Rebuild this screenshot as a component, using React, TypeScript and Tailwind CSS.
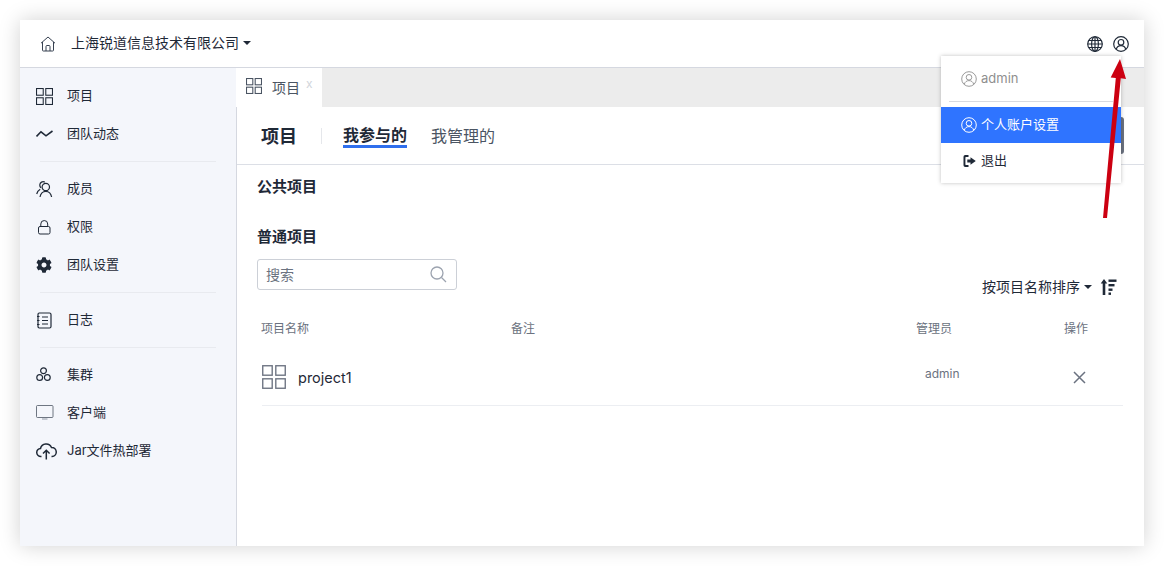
import React from "react";

const Grid = ({ size = 17, color = "#1f2937", sw = 1 }: { size?: number; color?: string; sw?: number }) => (
  <svg width={size} height={size} viewBox="0 0 16 16" fill="none" stroke={color} strokeWidth={sw}>
    <rect x="0.5" y="0.5" width="6.3" height="6.3" />
    <rect x="9.2" y="0.5" width="6.3" height="6.3" />
    <rect x="0.5" y="9.2" width="6.3" height="6.3" />
    <rect x="9.2" y="9.2" width="6.3" height="6.3" />
  </svg>
);

const UserCircle = ({ size = 16, color = "#1f2937", sw = 1.2 }: { size?: number; color?: string; sw?: number }) => (
  <svg width={size} height={size} viewBox="0 0 16 16" fill="none" stroke={color} strokeWidth={sw}>
    <circle cx="8" cy="8" r="7.3" />
    <circle cx="8" cy="6.3" r="2.8" />
    <path d="M3.3 13.2c.6-2.3 2.5-3.6 4.7-3.6s4.100 1.300 4.700 3.600" />
  </svg>
);

const Wave = () => (
  <svg width="17" height="17" viewBox="0 0 17 17" fill="none" stroke="#1f2937" strokeWidth="1.6">
    <path d="M0.500 10.500 L5 5.800 L10 9.800 L16.500 5" />
  </svg>
);
const Members = () => (
  <svg width="17" height="17" viewBox="0 0 17 17" fill="none" stroke="#1f2937" strokeWidth="1.2">
    <circle cx="9.800" cy="6" r="3.700" />
    <path d="M4 16c.5-3 2.800-5.700 5.800-5.700s5.300 2.700 5.800 5.700" />
    <path d="M8.800 1.100C6.500 0 4 1.300 3.800 3.800c-.1 1.300.4 2.300 1.200 3.100M4.200 8.300C2.500 9.300 1.200 11 .7 13" />
  </svg>
);
const Lock = () => (
  <svg width="17" height="17" viewBox="0 0 17 17" fill="none" stroke="#1f2937" strokeWidth="1">
    <rect x="2.500" y="7.500" width="11.500" height="7.500" rx="1.500" />
    <path d="M4.800 7.500V5a3.450 3.450 0 0 1 6.900 0v2.500" />
  </svg>
);
const Gear = () => (
  <svg width="16" height="16" viewBox="0 0 512 512" fill="#1f2937">
    <path d="M487.400 315.700l-42.600-24.600c4.300-23.200 4.300-47 0-70.200l42.600-24.600c4.900-2.800 7.100-8.600 5.500-14-11.100-35.600-30-67.800-54.700-94.600-3.800-4.100-10-5.100-14.800-2.300L380.800 110c-17.900-15.400-38.500-27.300-60.800-35.100V25.800c0-5.600-3.900-10.500-9.400-11.700-36.700-8.200-74.300-7.800-109.200 0-5.500 1.200-9.400 6.100-9.400 11.700V75c-22.200 7.900-42.800 19.800-60.800 35.100L88.700 85.500c-4.900-2.800-11-1.900-14.800 2.300-24.700 26.700-43.600 58.900-54.700 94.600-1.700 5.400.6 11.200 5.500 14L67.300 221c-4.300 23.200-4.300 47 0 70.200l-42.600 24.600c-4.900 2.800-7.100 8.600-5.500 14 11.100 35.600 30 67.800 54.700 94.600 3.800 4.100 10 5.100 14.800 2.300l42.600-24.600c17.900 15.400 38.500 27.300 60.800 35.100v49.200c0 5.600 3.900 10.500 9.400 11.700 36.700 8.200 74.300 7.800 109.200 0 5.500-1.200 9.400-6.100 9.400-11.700v-49.200c22.200-7.900 42.800-19.800 60.800-35.100l42.600 24.600c4.900 2.800 11 1.900 14.800-2.300 24.700-26.700 43.600-58.900 54.700-94.600 1.500-5.500-.7-11.300-5.600-14.100zM256 336c-44.100 0-80-35.900-80-80s35.900-80 80-80 80 35.900 80 80-35.900 80-80 80z" />
  </svg>
);
const Log = () => (
  <svg width="17" height="17" viewBox="0 0 17 17" fill="none" stroke="#1f2937" strokeWidth="1.2">
    <path d="M3 1h10.500a1.500 1.500 0 0 1 1.500 1.500v12a1.500 1.500 0 0 1-1.500 1.500H3" />
    <path d="M3 1a1.500 1.500 0 0 0-1 1.500v12A1.500 1.500 0 0 0 3 16" />
    <path d="M1 4.500h2.500M1 8.500h2.500M1 12.500h2.500M6 5h6M6 8.500h6M6 12h6" />
  </svg>
);
const Cluster = () => (
  <svg width="16" height="16" viewBox="0 0 16 16" fill="none" stroke="#1f2937" strokeWidth="1.2">
    <circle cx="7.500" cy="3.800" r="2.900" />
    <circle cx="3.700" cy="10.500" r="2.900" />
    <circle cx="11.300" cy="10.500" r="2.900" />
  </svg>
);
const Monitor = () => (
  <svg width="18" height="16" viewBox="0 0 18 16" fill="none" stroke="#4b5563" strokeWidth="0.8">
    <rect x="0.500" y="0.500" width="16.500" height="12" rx="1" />
    <path d="M6 14h5.500" strokeWidth="1.100" stroke="#9ca3af" />
  </svg>
);
const CloudUp = () => (
  <svg width="21" height="17" viewBox="0 0 21 17" fill="none" stroke="#1f2937" strokeWidth="1.500">
    <path d="M5.500 13.500H5A4 4 0 0 1 4.500 5.500 5.800 5.800 0 0 1 15.500 4.500a4.500 4.500 0 0 1 .5 9h-.5" />
    <path d="M10.300 16.500V8M7 10.500l3.300-3.200 3.300 3.200" />
  </svg>
);

const Home = () => (
  <svg width="16" height="16" viewBox="0 0 16 16" fill="none" stroke="#374151" strokeWidth="1">
    <path d="M1 7.200 8 1l7 6.200M2.500 6v8.200a.8.800 0 0 0 .8.800h9.400a.8.800 0 0 0 .8-.8V6" />
    <path d="M6 15v-4.500a1 1 0 0 1 1-1h2a1 1 0 0 1 1 1V15" />
  </svg>
);
const Globe = () => (
  <svg width="16" height="16" viewBox="0 0 16 16" fill="none" stroke="#1f2937" strokeWidth="1.150">
    <circle cx="8" cy="8" r="7.300" />
    <ellipse cx="8" cy="8" rx="3.400" ry="7.300" />
    <path d="M8 .7v14.600M.7 8h14.600M1.700 4.500h12.600M1.700 11.500h12.600" />
  </svg>
);
const Logout = () => (
  <svg width="13" height="14" viewBox="0 0 13 14" fill="#1f2937">
    <path d="M5.500 1H2.200A1.700 1.700 0 0 0 .5 2.700v8.600A1.700 1.700 0 0 0 2.200 13h3.300v-2H2.800a.4.400 0 0 1-.4-.4V3.400a.4.400 0 0 1 .4-.4h2.700z" />
    <path d="M7.500 3.300 12.800 7l-5.300 3.700V8.500H4.300v-3h3.200z" />
  </svg>
);
const Search = () => (
  <svg width="17" height="17" viewBox="0 0 17 17" fill="none" stroke="#9ca3af" strokeWidth="1.300">
    <circle cx="7" cy="7" r="6" />
    <path d="m11.500 11.500 4.500 4.500" />
  </svg>
);
const SortIcon = () => (
  <svg width="17" height="16" viewBox="0 0 17 16" fill="#1f2937">
    <path d="M4 0 7.300 4.500H5.300V16H2.700V4.500H.7z" />
    <rect x="8.500" y="0.500" width="8" height="2.400" />
    <rect x="8.500" y="5" width="6" height="2.400" />
    <rect x="8.500" y="9.500" width="4" height="2.400" />
    <rect x="8.500" y="13.500" width="2.500" height="2.400" />
  </svg>
);
const Caret = ({ cls = "" }: { cls?: string }) => (
  <span className={`inline-block w-0 h-0 border-x-[4px] border-x-transparent border-t-[4px] border-t-[#1f2937] ${cls}`} />
);

const NavItem = ({ icon, label }: { icon: React.ReactNode; label: string }) => (
  <div className="h-[38px] flex items-center pl-[16px] text-[13px] text-[#1f2937]">
    <span className="w-[31px] flex items-center">{icon}</span>
    <span>{label}</span>
  </div>
);
const NavDivider = () => <div className="h-px bg-[#e8eaef] ml-[20px] mr-[20px] my-[8px]" />;

export default function App() {
  return (
    <div
      className="w-[1164px] h-[566px] bg-white p-[20px] overflow-hidden"
      style={{ fontFamily: 'Inter, "Noto Sans CJK SC", sans-serif' }}
    >
      <div className="relative w-full h-full bg-white flex flex-col shadow-[0_0_20px_rgba(0,0,0,0.18)]">
        <header className="h-[48px] shrink-0 flex items-center border-b border-[#d5d8e0] pl-[20px] pr-[15px]">
          <Home />
          <span className="ml-[15px] -mt-[2px] text-[14px] text-[#1f2937]">上海锐道信息技术有限公司</span>
          <Caret cls="ml-[4px] -mt-[1px]" />
          <div className="ml-auto flex items-center gap-[10px]">
            <Globe />
            <UserCircle />
          </div>
        </header>

        <div className="flex-1 flex min-h-0">
          <aside className="w-[217px] shrink-0 bg-[#f4f6fb] border-r border-[#d5d8e0] pt-[9px]">
            <NavItem icon={<Grid />} label="项目" />
            <NavItem icon={<Wave />} label="团队动态" />
            <NavDivider />
            <NavItem icon={<Members />} label="成员" />
            <NavItem icon={<Lock />} label="权限" />
            <NavItem icon={<Gear />} label="团队设置" />
            <NavDivider />
            <NavItem icon={<Log />} label="日志" />
            <NavDivider />
            <NavItem icon={<Cluster />} label="集群" />
            <NavItem icon={<Monitor />} label="客户端" />
            <NavItem icon={<CloudUp />} label="Jar文件热部署" />
          </aside>

          <main className="flex-1 min-w-0 flex flex-col">
            <div className="h-[39px] shrink-0 bg-[#ececec] flex">
              <div className="relative -ml-px w-[86px] bg-white flex items-start pt-[10px] pl-[10px] text-[14px] text-[#4b5563]">
                <Grid size={16} color="#4b5563" sw={1.1} />
                <span className="ml-[10px] leading-[20px]">项目</span>
                <span className="absolute left-[70px] top-[10px] text-[12px] leading-[12px] text-[#d1d5db]">x</span>
              </div>
            </div>

            <div className="h-[58px] shrink-0 border-b border-[#dcdfe6] flex items-center pl-[24px]">
              <span className="text-[18px] font-bold text-[#1f2937] w-[60px] mt-[1px]">项目</span>
              <span className="w-px h-[16px] bg-[#e5e7eb]" />
              <span className="ml-[21px] text-[16px] font-semibold text-[#1f2937] leading-[20px] border-b-[3px] border-[#2f6fed] h-[23px] mt-[1px]">我参与的</span>
              <span className="ml-[24px] text-[16px] text-[#4b5563]">我管理的</span>
            </div>

            <div className="flex-1 pl-[20px] pr-[21px]">
              <h3 className="mt-[12px] leading-[20px] text-[15px] font-bold text-[#1f2937]">公共项目</h3>
              <h3 className="mt-[30px] leading-[20px] text-[15px] font-bold text-[#1f2937]">普通项目</h3>

              <div className="flex items-start justify-between">
                <div className="mt-[12px] w-[200px] h-[31px] rounded-[3px] border border-[#ccd0d7] flex items-center pl-[8px] pr-[9px] justify-between">
                  <span className="text-[14px] text-[#6b7280]">搜索</span>
                  <Search />
                </div>
                <div className="mt-[30px] mr-[6px] flex items-center text-[14px] leading-[20px] text-[#1f2937]">
                  <span>按项目名称排序</span>
                  <Caret cls="ml-[4px] mr-[8px]" />
                  <SortIcon />
                </div>
              </div>

              <div className="mt-[23px] pl-[4px] flex text-[12px] text-[#6b7280] leading-[18px]">
                <span className="w-[250px]">项目名称</span>
                <span className="w-[405px]">备注</span>
                <span className="w-[148px]">管理员</span>
                <span>操作</span>
              </div>

              <div className="ml-[5px] mt-[13px] h-[55px] border-b border-[#eceef2] flex items-start">
                <span className="w-[36px] pt-[14px]"><Grid size={24} color="#6b7280" sw={0.9} /></span>
                <span className="w-[627px] pt-[17px] text-[14.500px] leading-[20px] text-[#1f2937]">project1</span>
                <span className="w-[148px] pt-[14px] text-[12px] leading-[18px] text-[#6b7280]">admin</span>
                <span className="pt-[20px]">
                  <svg width="13" height="13" viewBox="0 0 13 13" stroke="#6b7280" strokeWidth="1.500"><path d="M1 1l11 11M12 1 1 12" /></svg>
                </span>
              </div>
            </div>
          </main>
        </div>

        <div className="absolute left-[1101px] top-[97px] w-[3px] h-[37px] bg-[#6b7280] rounded-r-[3px]" />

        <div className="absolute left-[921px] top-[36px] w-[180px] h-[127px] bg-white shadow-[0_0_4px_rgba(0,0,0,0.25)] text-[13px]">
          <div className="h-[45px] flex items-center pl-[20px] gap-[4px] text-[#8f8f8f]">
            <UserCircle size={16} color="#9a9a9a" sw={1} />
            <span>admin</span>
          </div>
          <div className="h-px bg-[#d8dae0] ml-[8px] mr-[8px]" />
          <div className="h-[36px] mt-[5px] bg-[#2f74ff] text-white flex items-center pl-[20px] gap-[4px]">
            <UserCircle size={16} color="#ffffff" sw={1} />
            <span>个人账户设置</span>
          </div>
          <div className="h-[36px] flex items-center pl-[22px] gap-[5px] text-[#1f2937]">
            <Logout />
            <span>退出</span>
          </div>
        </div>

        <svg className="absolute left-[1075px] top-[38px]" width="34" height="164" viewBox="0 0 34 164" fill="#cc0011">
          <path d="M25 1 L31 21 L25.800 20.300 L12 160 L8 160 L20.800 20 L15.700 19.500 Z" />
        </svg>
      </div>
    </div>
  );
}
